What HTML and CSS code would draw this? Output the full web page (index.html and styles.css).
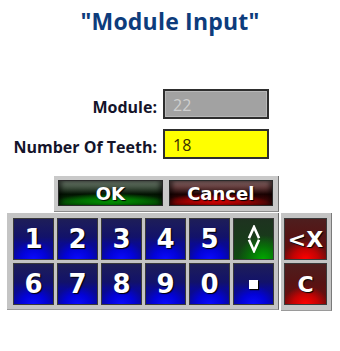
FILE: index.html
```html
<!DOCTYPE html>
<html lang="en">
<head>
  <meta charset="UTF-8" />
  <title>Module Input</title>
  <link rel="stylesheet" href="styles.css">
</head>
<body>
  <h1 class="title">"Module Input"</h1>

  <div class="form">
    <div class="field">
      <label>Module:</label>
      <div class="box box-off">22</div>
    </div>
    <div class="field">
      <label>Number Of Teeth:</label>
      <div class="box box-on">18</div>
    </div>
  </div>

  <div class="actions">
    <button class="act act-ok">OK</button>
    <button class="act act-cancel">Cancel</button>
  </div>

  <div class="pad-row">
    <div class="keypad">
      <button class="key">1</button>
      <button class="key">2</button>
      <button class="key">3</button>
      <button class="key">4</button>
      <button class="key">5</button>
      <button class="key key-green" aria-label="up down">
        <svg class="arrows" width="14" height="28" viewBox="0 0 14 28">
          <polyline points="2.5,12 7,2 11.5,12" />
          <polyline points="2.5,16 7,26 11.5,16" />
        </svg>
      </button>
      <button class="key">6</button>
      <button class="key">7</button>
      <button class="key">8</button>
      <button class="key">9</button>
      <button class="key">0</button>
      <button class="key"><span class="dot"></span></button>
    </div>
    <div class="sidepad">
      <button class="key key-red key-small">&lt;X</button>
      <button class="key key-red key-small">C</button>
    </div>
  </div>
</body>
</html>
```

FILE: styles.css
```css
body {
  margin: 0;
  background: #fff;
  font-family: 'Open Sans', 'DejaVu Sans', sans-serif;
  width: 340px;
}
.title {
  margin: 0;
  padding-top: 5px;
  height: 60px;
  text-align: center;
  font-size: 23px;
  font-weight: 700;
  color: #0d3c7c;
  letter-spacing: 0.2px;
}
.form {
  padding-top: 24px;
  display: flex;
  flex-direction: column;
  gap: 10px;
}
.field {
  display: flex;
  align-items: center;
}
.field label {
  width: 158px;
  text-align: right;
  font-size: 16px;
  font-weight: 700;
  color: #14142a;
  padding-top: 5px;
  box-sizing: border-box;
  padding-right: 1px;
}
.box {
  margin-left: 5px;
  width: 106px;
  height: 30px;
  box-sizing: border-box;
  border: 2px solid #2e2e2e;
  padding: 3px 0 0 8px;
  font-size: 16px;
}
.box-off {
  background: #a2a2a2;
  color: #cfcfcf;
  box-shadow: inset 0 0 0 1px #b8b8b8;
}
.box-on {
  background: #ffff00;
  color: #3a2c00;
}
.actions {
  margin: 17px 0 0 54px;
  width: 225px;
  height: 36px;
  box-sizing: border-box;
  padding: 4px 5px 5px 4px;
  background: #c9c9c9;
  border-right: 1px solid #6f6f6f;
  border-bottom: 1px solid #8a8a8a;
  display: flex;
  gap: 6px;
}
.act {
  flex: 1;
  border: 1px solid #2a2a2a;
  margin: 0;
  padding: 0;
  font-family: 'DejaVu Sans', sans-serif;
  font-weight: 700;
  font-size: 18px;
  color: #fff;
  text-shadow: 1px 1px 1px #000;
  box-shadow: inset 3px 0 4px rgba(0, 0, 0, 0.5), inset -3px 0 4px rgba(0, 0, 0, 0.5);
}
.act-ok {
  background: radial-gradient(ellipse 60% 50% at 50% 100%, #00b000 0%, rgba(0, 140, 0, 0.7) 60%, transparent 100%),
    linear-gradient(#6f7d6f 0%, #3a4a3a 30%, #021202 55%, #0b4a0b 100%);
}
.act-cancel {
  background: radial-gradient(ellipse 55% 50% at 45% 100%, #ff0000 0%, rgba(210, 0, 0, 0.7) 60%, transparent 100%),
    linear-gradient(#8a6a6a 0%, #5a3434 30%, #1a0202 55%, #5a0a0a 100%);
}
.pad-row {
  display: flex;
  align-items: flex-start;
  margin-top: 1px;
}
.keypad {
  margin-left: 7px;
  width: 272px;
  box-sizing: border-box;
  padding: 5px 4px 4px 6px;
  background: #c4c4c4;
  border-right: 1px solid #6a6a6a;
  border-bottom: 1px solid #9a9a9a;
  display: grid;
  grid-template-columns: repeat(6, 41px);
  grid-auto-rows: 42px;
  gap: 3px 3px;
}
.sidepad {
  margin-left: 2px;
  width: 51px;
  box-sizing: border-box;
  padding: 5px 4px 5px 3px;
  background: #c4c4c4;
  border-right: 1px solid #7a7a7a;
  border-bottom: 1px solid #9a9a9a;
  display: flex;
  flex-direction: column;
  gap: 3px;
}
.key {
  margin: 0;
  padding: 0;
  height: 42px;
  border: 1px solid #3a3a3a;
  color: #fff;
  font-family: 'DejaVu Sans', sans-serif;
  font-weight: 700;
  font-size: 26px;
  text-shadow: 1px 1px 1px #000;
  background: radial-gradient(ellipse 60% 45% at 50% 100%, #0a0aff 0%, rgba(0, 0, 240, 0.75) 55%, transparent 100%),
    linear-gradient(#1e1e58 0%, #12126a 45%, #0a0a90 62%, #0a0a88 100%);
  display: flex;
  align-items: center;
  justify-content: center;
}
.key-green {
  background: radial-gradient(ellipse 65% 60% at 75% 100%, #00a800 0%, rgba(0, 140, 0, 0.6) 55%, transparent 100%),
    linear-gradient(#1e3220 0%, #183a1a 50%, #0f4a10 100%);
}
.key-red {
  background: radial-gradient(ellipse 55% 45% at 50% 100%, #ff0000 0%, rgba(225, 0, 0, 0.75) 55%, transparent 100%),
    linear-gradient(#4e1e1e 0%, #561414 45%, #700a0a 100%);
}
.key-small {
  width: 43px;
  font-size: 22px;
}
.arrows polyline {
  fill: none;
  stroke: #fff;
  stroke-width: 2.6;
  stroke-linecap: square;
  stroke-linejoin: miter;
}
.dot {
  width: 9px;
  height: 9px;
  background: #fff;
  box-shadow: 1px 1px 1px #000;
}
```
